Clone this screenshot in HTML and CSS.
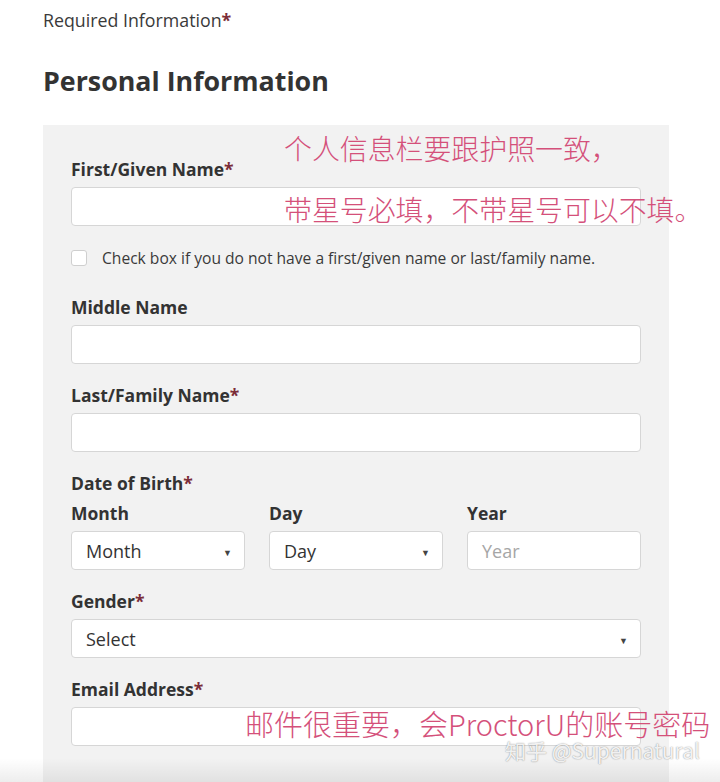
FILE: index.html
```html
<!DOCTYPE html>
<html lang="en">
<head>
<meta charset="utf-8">
<title>Personal Information</title>
<link rel="stylesheet" href="styles.css">
</head>
<body>
<div class="page">
  <p class="required">Required Information<span class="star">*</span></p>
  <h1 class="title">Personal Information</h1>
  <div class="panel">
    <div class="field">
      <label class="label">First/Given Name<span class="star">*</span></label>
      <div class="input"></div>
    </div>
    <div class="check-row">
      <span class="checkbox"></span>
      <span class="check-text">Check box if you do not have a first/given name or last/family name.</span>
    </div>
    <div class="field">
      <label class="label">Middle Name</label>
      <div class="input"></div>
    </div>
    <div class="field">
      <label class="label">Last/Family Name<span class="star">*</span></label>
      <div class="input"></div>
    </div>
    <div class="field">
      <label class="label">Date of Birth<span class="star">*</span></label>
      <div class="dob">
        <div class="dob-col">
          <label class="label">Month</label>
          <div class="input select"><span>Month</span><span class="arrow">&#9660;</span></div>
        </div>
        <div class="dob-col">
          <label class="label">Day</label>
          <div class="input select"><span>Day</span><span class="arrow">&#9660;</span></div>
        </div>
        <div class="dob-col">
          <label class="label">Year</label>
          <div class="input select"><span class="placeholder">Year</span></div>
        </div>
      </div>
    </div>
    <div class="field">
      <label class="label">Gender<span class="star">*</span></label>
      <div class="input select"><span>Select</span><span class="arrow">&#9660;</span></div>
    </div>
    <div class="field">
      <label class="label">Email Address<span class="star">*</span></label>
      <div class="input"></div>
    </div>
  </div>

  <div class="note note-1">个人信息栏要跟护照一致，</div>
  <div class="note note-2">带星号必填，不带星号可以不填。</div>
  <div class="note note-3">邮件很重要，会ProctorU的账号密码</div>
  <div class="watermark">知乎 @Supernatural</div>
  <div class="fade"></div>
</div>
</body>
</html>
```

FILE: styles.css
```css
html, body {
  margin: 0;
  padding: 0;
  background: #ffffff;
}
body {
  font-family: "Open Sans", "Noto Sans", sans-serif;
  color: #333333;
  overflow: hidden;
  height: 782px;
}
.page {
  position: relative;
  width: 720px;
  height: 782px;
  overflow: hidden;
  padding-left: 43px;
  box-sizing: border-box;
}
.required {
  margin: 0;
  padding-top: 9px;
  font-size: 17.8px;
  line-height: 22px;
  color: #3a3a3a;
}
.star {
  color: #7b2d38;
  font-weight: 700;
}
.title {
  margin: 34px 0 0 0;
  font-size: 26.8px;
  line-height: 32px;
  font-weight: 700;
  color: #333333;
}
.panel {
  margin-top: 28px;
  width: 626px;
  box-sizing: border-box;
  background: #f2f2f2;
  padding: 32px 28px 40px 28px;
  height: 700px;
}
.field {
  margin-bottom: 19px;
}
.label {
  display: block;
  font-size: 17.5px;
  line-height: 24px;
  font-weight: 700;
  color: #333333;
  margin-bottom: 6px;
  white-space: nowrap;
}
.input {
  height: 39px;
  box-sizing: border-box;
  background: #ffffff;
  border: 1px solid #d6d6d6;
  border-radius: 4px;
}
.select {
  display: flex;
  align-items: center;
  justify-content: space-between;
  padding: 0 12px 0 14px;
  font-size: 18px;
  color: #333333;
}
.placeholder {
  color: #a6a6a6;
}
.arrow {
  font-size: 9px;
  color: #444444;
  padding-top: 3px;
}
.check-row {
  display: flex;
  align-items: center;
  margin-top: 24px;
  margin-bottom: 29px;
  height: 16px;
}
.checkbox {
  width: 16px;
  height: 16px;
  flex: none;
  box-sizing: border-box;
  border: 1px solid #cfcfcf;
  border-radius: 3px;
  background: #ffffff;
  margin-right: 15px;
}
.check-text {
  font-size: 15.6px;
  color: #3a3a3a;
  white-space: nowrap;
}
.dob {
  display: flex;
  gap: 24px;
}
.dob-col {
  flex: 1;
}
.note {
  position: absolute;
  font-family: "Noto Sans CJK SC", "Noto Sans", sans-serif;
  color: #d4507a;
  font-weight: 300;
  white-space: nowrap;
}
.note-1 {
  left: 284px;
  top: 128px;
  font-size: 27.9px;
}
.note-2 {
  left: 284px;
  top: 189px;
  font-size: 27.9px;
}
.note-3 {
  left: 245px;
  top: 702px;
  font-size: 29px;
}
.watermark {
  position: absolute;
  left: 505px;
  top: 735px;
  font-family: "Noto Sans CJK SC", "Noto Sans", sans-serif;
  font-size: 21px;
  color: rgba(255, 255, 255, 0.9);
  text-shadow: 0 0 1px rgba(0,0,0,0.35), 0 0 2px rgba(0,0,0,0.2);
  white-space: nowrap;
}
.fade {
  position: absolute;
  left: 0;
  right: 0;
  bottom: 0;
  height: 24px;
  background: linear-gradient(to bottom, rgba(0,0,0,0), rgba(0,0,0,0.07));
}
```
